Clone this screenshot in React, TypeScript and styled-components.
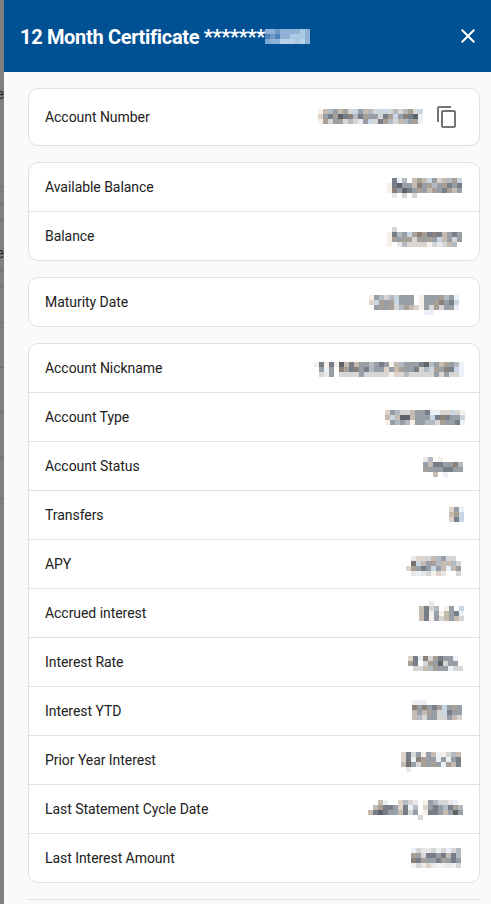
import React from "react";
import styled, { createGlobalStyle } from "styled-components";
import { MdClose, MdContentCopy } from "react-icons/md";

const Global = createGlobalStyle`
  html, body { margin: 0; padding: 0; height: 100%; overflow: hidden; }
  body { font-family: Roboto, "Liberation Sans", sans-serif; background: #fafafa; }
`;

const PALETTE: Record<string, string> = {
  a: "#f6f0ea", b: "#ddd3cb", c: "#c6bbb1", d: "#a89f96", e: "#8b8178", f: "#77706a",
  g: "#eaf0f6", h: "#c8d6e3", i: "#b3bac1", j: "#989ea5", k: "#787e87", l: "#5e6269",
  m: "#d6d6d6", n: "#e8e8e8",
  p: "#6d9ac8", q: "#4d84bd", r: "#8fb2d6", s: "#a9c8e3", t: "#bad1e7", u: "#7fa6d0", v: "#2f6ba8",
};

const Page = styled.div`
  display: flex;
  width: 491px;
  height: 904px;
  overflow: hidden;
`;

const Backdrop = styled.div`
  display: flex;
  flex-direction: column;
  flex: 0 0 4px;
  background: #808080;
  overflow: hidden;
`;

const BackdropSlice = styled.div<{ $h: number; $line?: boolean }>`
  flex: 0 0 ${(p) => p.$h}px;
  box-sizing: border-box;
  border-bottom: ${(p) => (p.$line ? "1px solid #717171" : "0")};
  display: flex;
  align-items: flex-end;
  justify-content: flex-end;
  font-size: 14px;
  line-height: 16px;
  color: #2a2a2a;
  white-space: nowrap;
`;

const BackdropMark = styled.div`
  flex: 0 0 12px;
  width: 3px;
  background: #3a2a2a;
  border-radius: 0 0 3px 0;
`;

const Panel = styled.div`
  flex: 1;
  display: flex;
  flex-direction: column;
  background: #fafafa;
  min-width: 0;
`;

const Header = styled.header`
  flex: 0 0 72px;
  box-sizing: border-box;
  display: flex;
  align-items: center;
  justify-content: space-between;
  padding: 0 11px 0 16px;
  background: #005094;
  color: #fff;
`;

const TitleWrap = styled.div`
  display: flex;
  align-items: center;
`;

const Title = styled.h1`
  margin: 2px 0 0;
  font-size: 20px;
  font-weight: 700;
  line-height: 24px;
  letter-spacing: -0.33px;
  white-space: nowrap;
`;

const CloseButton = styled.button`
  display: flex;
  width: 24px;
  height: 24px;
  padding: 0;
  border: 0;
  background: none;
  color: #fff;
`;

const Content = styled.main`
  display: flex;
  flex-direction: column;
  gap: 16px;
  padding: 16px 11px 0 24px;
`;

const Card = styled.section`
  background: #fff;
  border: 1px solid #e0e0e0;
  border-radius: 10px;
  overflow: hidden;
`;

const Row = styled.div<{ $tall?: boolean }>`
  display: flex;
  align-items: flex-start;
  height: ${(p) => (p.$tall ? 56 : 48)}px;
  & + & { border-top: 1px solid #e0e0e0; }
`;

const Label = styled.span`
  align-self: center;
  padding-left: 16px;
  font-size: 14px;
  line-height: 20px;
  letter-spacing: -0.05px;
  color: #212121;
`;

const MosaicSvg = styled.svg<{ $top: number; $right: number }>`
  display: block;
  flex: none;
  margin: ${(p) => p.$top}px ${(p) => p.$right}px 0 auto;
  shape-rendering: crispEdges;
`;

const TitleMosaic = styled.svg`
  display: block;
  flex: none;
  shape-rendering: crispEdges;
`;

const CopyButton = styled.button`
  display: flex;
  align-self: center;
  width: 24px;
  height: 24px;
  margin-right: 20px;
  padding: 0;
  border: 0;
  background: none;
  color: #757575;
`;

const Rule = styled.hr`
  margin: 0;
  border: 0;
  border-top: 1px solid #e0e0e0;
`;

const cells = (pattern: string[]) =>
  pattern.flatMap((line, y) =>
    line.split("").map((ch, x) =>
      PALETTE[ch] ? <rect key={`${x}-${y}`} x={x * 5} y={y * 5} width={5} height={5} fill={PALETTE[ch]} /> : null
    )
  );

const Mosaic = ({ pattern, top, right }: { pattern: string[]; top: number; right: number }) => (
  <MosaicSvg
    $top={top}
    $right={right}
    width={pattern[0].length * 5}
    height={pattern.length * 5}
    viewBox={`0 0 ${pattern[0].length * 5} ${pattern.length * 5}`}
    aria-hidden="true"
  >
    {cells(pattern)}
  </MosaicSvg>
);

const backdrop: { h: number; line?: boolean; text?: string; mark?: boolean }[] = [
  { h: 72 },
  { h: 30, text: "e" },
  { h: 85, line: true, mark: true },
  { h: 17, line: true },
  { h: 17, line: true },
  { h: 40, text: "e" },
  { h: 10, line: true },
  { h: 16, line: true },
  { h: 36, line: true },
  { h: 45, line: true },
  { h: 45, line: true },
  { h: 45, line: true },
  { h: 41, line: true },
];

const rows: { label: string; pattern: string[]; top: number; right: number }[][] = [
  [
    {
      label: "Available Balance",
      top: 15,
      right: 17,
      pattern: [".kgi.cdchjbcidh", "akljjcejdijdkjk", "aejlkjdjcdjkdcj", ".n.m.m........."],
    },
    {
      label: "Balance",
      top: 15,
      right: 17,
      pattern: [".m.............", "akijhdedkekcjkj", "adjddmdjdjhcjmj", "a.nimbmbamnmci."],
    },
  ],
  [
    {
      label: "Maturity Date",
      top: 17,
      right: 15,
      pattern: [
        "ajimihjjj.ajjjdijg.",
        "bhdjdhjjj.ajjdejkh.",
        ".jdjdmidcmajmdmjjg.",
        "...........gg......",
      ],
    },
  ],
  [
    {
      label: "Account Nickname",
      top: 13,
      right: 15,
      pattern: [
        "..............................",
        "akakalckcjjijkjacijjjklijcdjig",
        ".jgj.edkejkijjbjcdjjkmihdjekhg",
        ".mnj.mmmmjmmmmmabmimmmmmjmjmmg",
      ],
    },
    {
      label: "Account Type",
      top: 17,
      right: 14,
      pattern: ["bjimmcjjkggmbhma", "chcllcjjjhkekjjh", "ajijiajjiimdjjkg"],
    },
    {
      label: "Account Status",
      top: 15,
      right: 16,
      pattern: ["ni.a....", "jckkjjei", "djjjkkjj", "..c.g..."],
    },
    { label: "Transfers", top: 16, right: 15, pattern: ["bjg", "cdh", "bkh"] },
    {
      label: "APY",
      top: 16,
      right: 18,
      pattern: [".nbmmcijmm.", ".fhcjdiccim", "bdjkjhjcgcj", ".ngnmabn..m"],
    },
    {
      label: "Accrued interest",
      top: 12,
      right: 15,
      pattern: ["..n......", "ckmi.aj.h", "ckajacjkg", "ckajmcjcm"],
    },
    {
      label: "Interest Rate",
      top: 18,
      right: 16,
      pattern: ["bkgemdkjjg.", "dk.mdjlmjj.", ".mmcidjjgmm"],
    },
    {
      label: "Interest YTD",
      top: 13,
      right: 17,
      pattern: ["agg.......", "ejejkdhjdj", "cjcdjmhkjj", "cimjjmmjcm"],
    },
    {
      label: "Prior Year Interest",
      top: 16,
      right: 18,
      pattern: ["bkmjajcgamic", "bkgedjjgjgjk", "cfjmdjdjgdck", ".n.........."],
    },
    {
      label: "Last Statement Cycle Date",
      top: 15,
      right: 16,
      pattern: [
        "..cg..bimn.ajimmng.",
        ".cdkkjbkgi.bjkjikdi",
        "cklkjjckmj.akkjcjlj",
        "..........m........",
      ],
    },
    {
      label: "Last Interest Amount",
      top: 14,
      right: 18,
      pattern: ["gmnnmgmgmi", "djmkkjkcki", "ekdjjkdjkj", "amnbnagngm"],
    },
  ],
];

const titlePattern = ["rrprrrrsr", "qpqrrsssr", "urrtttstr"];

export default function App() {
  return (
    <Page>
      <Global />
      <Backdrop aria-hidden="true">
        {backdrop.map((s, i) => (
          <BackdropSlice key={i} $h={s.h} $line={s.line}>
            {s.text}
            {s.mark && <BackdropMark />}
          </BackdropSlice>
        ))}
      </Backdrop>
      <Panel>
        <Header>
          <TitleWrap>
            <Title>12 Month Certificate *******</Title>
            <TitleMosaic width={45} height={15} viewBox="0 0 45 15" aria-hidden="true">
              {cells(titlePattern)}
            </TitleMosaic>
          </TitleWrap>
          <CloseButton aria-label="Close">
            <MdClose size={24} />
          </CloseButton>
        </Header>
        <Content>
          <Card>
            <Row $tall>
              <Label>Account Number</Label>
              <Mosaic
                top={20}
                right={12}
                pattern={[
                  "acijcdmhjcimhhmimidmh",
                  "bjkdlkeikdjjmkdhjeklg",
                  "admjdmimnjhmkdimcijdg",
                ]}
              />
              <CopyButton aria-label="Copy">
                <MdContentCopy size={24} />
              </CopyButton>
            </Row>
          </Card>
          {rows.map((group, i) => (
            <Card key={i}>
              {group.map((r) => (
                <Row key={r.label}>
                  <Label>{r.label}</Label>
                  <Mosaic pattern={r.pattern} top={r.top} right={r.right} />
                </Row>
              ))}
            </Card>
          ))}
          <Rule />
        </Content>
      </Panel>
    </Page>
  );
}
